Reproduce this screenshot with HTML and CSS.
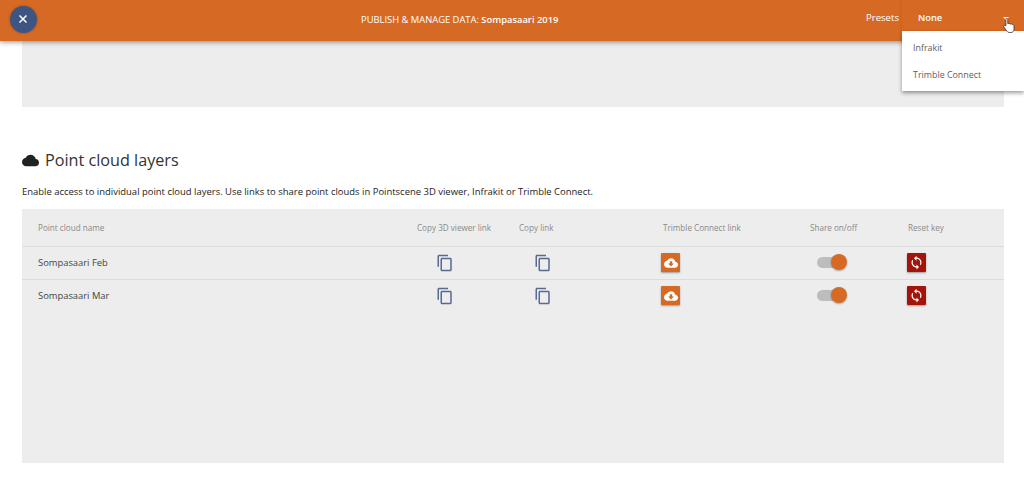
FILE: index.html
```html
<!DOCTYPE html>
<html lang="en">
<head>
<meta charset="utf-8">
<title>Publish &amp; manage data</title>
<link rel="stylesheet" href="styles.css">
</head>
<body>
<svg class="defs" width="0" height="0" aria-hidden="true">
  <symbol id="copy" viewBox="0 0 24 24"><path fill="currentColor" d="M16 1H4c-1.1 0-2 .9-2 2v14h2V3h12V1zm3 4H8c-1.1 0-2 .9-2 2v14c0 1.1.9 2 2 2h11c1.1 0 2-.9 2-2V7c0-1.1-.9-2-2-2zm0 16H8V7h11v14z"/></symbol>
  <symbol id="cloud" viewBox="0 0 24 24"><path fill="currentColor" d="M19.35 10.04C18.67 6.59 15.64 4 12 4 9.11 4 6.6 5.64 5.35 8.04 2.34 8.36 0 10.91 0 14c0 3.31 2.69 6 6 6h13c2.76 0 5-2.24 5-5 0-2.64-2.05-4.78-4.65-4.96z"/></symbol>
  <symbol id="cloud-down" viewBox="0 0 24 24"><path fill="currentColor" d="M19.35 10.04C18.67 6.59 15.64 4 12 4 9.11 4 6.6 5.64 5.35 8.04 2.34 8.36 0 10.91 0 14c0 3.31 2.69 6 6 6h13c2.76 0 5-2.24 5-5 0-2.64-2.05-4.78-4.65-4.96zM17 13l-5 5-5-5h3V9h4v4h3z"/></symbol>
  <symbol id="sync" viewBox="0 0 24 24"><path fill="currentColor" d="M12 4V1L8 5l4 4V6c3.31 0 6 2.69 6 6 0 1.01-.25 1.97-.7 2.8l1.46 1.46C19.54 15.03 20 13.57 20 12c0-4.42-3.58-8-8-8zm0 14c-3.31 0-6-2.69-6-6 0-1.01.25-1.97.7-2.8L5.24 7.74C4.46 8.97 4 10.43 4 12c0 4.42 3.58 8 8 8v3l4-4-4-4v3z"/></symbol>
</svg>

<header class="topbar">
  <button class="close" type="button" aria-label="Close">
    <svg viewBox="0 0 12 12" class="close-x"><path d="M2.500 2.500l7 7M9.500 2.500l-7 7"/></svg>
  </button>
  <h1 class="title">PUBLISH &amp; MANAGE DATA: <strong>Sompasaari 2019</strong></h1>
  <div class="presets">
    <span class="presets-label">Presets</span>
    <div class="select">
      <span class="select-value">None</span>
      <span class="select-arrow"></span>
    </div>
  </div>
</header>

<ul class="menu">
  <li>Infrakit</li>
  <li>Trimble Connect</li>
</ul>

<svg class="cursor" viewBox="0 0 12 17" aria-hidden="true">
  <path d="M3.500 1.200c.8 0 1.300.6 1.300 1.300v4.200c.9-.4 1.900-.3 2.400.3.8-.3 1.500-.1 1.900.4 1-.2 1.900.4 1.900 1.500v3.200c0 2-1.200 3.400-3 3.400H6.300c-1.200 0-1.900-.5-2.500-1.400L1 10.200c-.4-.7-.2-1.400.3-1.700.5-.3 1.100-.2 1.600.3V2.500c0-.7 0-1.300.6-1.300z" fill="#fff" stroke="#333" stroke-width=".8"/>
</svg>

<main class="content">
  <div class="panel-top"></div>

  <h2 class="heading">
    <svg class="heading-icon"><use href="#cloud"/></svg>
    Point cloud layers
  </h2>
  <p class="intro">Enable access to individual point cloud layers. Use links to share point clouds in Pointscene 3D viewer, Infrakit or Trimble Connect.</p>

  <section class="panel">
    <div class="row head">
      <div class="name">Point cloud name</div>
      <div>Copy 3D viewer link</div>
      <div>Copy link</div>
      <div class="h-trimble">Trimble Connect link</div>
      <div>Share on/off</div>
      <div class="h-reset">Reset key</div>
    </div>

    <div class="row item">
      <div class="name">Sompasaari Feb</div>
      <div class="c-viewer"><svg class="copy"><use href="#copy"/></svg></div>
      <div class="c-link"><svg class="copy"><use href="#copy"/></svg></div>
      <div><span class="square orange"><svg><use href="#cloud-down"/></svg></span></div>
      <div class="c-share"><span class="toggle"><span class="knob"></span></span></div>
      <div><span class="square red"><svg class="sync"><use href="#sync"/></svg></span></div>
    </div>

    <div class="row item">
      <div class="name">Sompasaari Mar</div>
      <div class="c-viewer"><svg class="copy"><use href="#copy"/></svg></div>
      <div class="c-link"><svg class="copy"><use href="#copy"/></svg></div>
      <div><span class="square orange"><svg><use href="#cloud-down"/></svg></span></div>
      <div class="c-share"><span class="toggle"><span class="knob"></span></span></div>
      <div><span class="square red"><svg class="sync"><use href="#sync"/></svg></span></div>
    </div>
  </section>
</main>
</body>
</html>
```
FILE: styles.css
```css
* { box-sizing: border-box; }

html, body {
  margin: 0;
  padding: 0;
  height: 482px;
  overflow: hidden;
  background: #fff;
  font-family: "Open Sans", "Noto Sans", sans-serif;
  color: #333;
}

.defs { position: absolute; }

.topbar {
  position: relative;
  z-index: 2;
  height: 41px;
  display: grid;
  grid-template-columns: 361px auto 1fr;
  align-items: center;
  background: #d66a25;
  box-shadow: 0 1px 5px rgba(0, 0, 0, .45);
  color: #fff;
}

.close {
  width: 27px;
  height: 27px;
  margin: 0 0 3px 9.5px;
  padding: 0;
  border: 0;
  border-radius: 50%;
  background: #3f5581;
  box-shadow: 0 0 3px rgba(0, 0, 0, .3);
  display: flex;
  align-items: center;
  justify-content: center;
}

.close-x { width: 12px; height: 12px; }
.close-x path { stroke: #fff; stroke-width: 1.5; fill: none; }

.title {
  margin: 0 0 3px;
  font-size: 9.400px;
  font-weight: 400;
  white-space: nowrap;
}

.title strong { font-weight: 600; }

.presets {
  justify-self: end;
  display: flex;
  align-self: stretch;
  align-items: flex-start;
}

.presets-label {
  padding: 11px 3px 0 0;
  font-size: 9.600px;
  line-height: 14px;
}

.select {
  width: 122px;
  height: 31px;
  padding: 11px 15px 0 16px;
  display: flex;
  justify-content: space-between;
  background: #d66a25;
  box-shadow: 0 0 4px rgba(0, 0, 0, .12);
}

.select-value {
  font-size: 9.300px;
  font-weight: 600;
  line-height: 14px;
}

.select-arrow {
  width: 0;
  height: 0;
  margin-top: 6px;
  border-left: 3px solid transparent;
  border-right: 3px solid transparent;
  border-top: 3px solid #fff;
}

.menu {
  position: absolute;
  z-index: 3;
  top: 31px;
  left: 902px;
  width: 122px;
  height: 60px;
  margin: 0;
  padding: 3px 0 0;
  list-style: none;
  background: #fff;
  box-shadow: 0 2px 4px rgba(0, 0, 0, .4);
  font-size: 8.900px;
  color: #5e5e5e;
}

.menu li {
  height: 27px;
  padding-left: 11px;
  line-height: 27px;
}

.cursor {
  position: absolute;
  z-index: 4;
  top: 17px;
  left: 1003px;
  width: 12px;
  height: 17px;
}

.content {
  padding: 0 20px 0 22px;
}

.panel-top {
  height: 66px;
  background: #ededed;
}

.heading {
  margin: 41px 0 0;
  height: 24px;
  display: flex;
  align-items: center;
  gap: 6px;
  font-size: 16.200px;
  font-weight: 400;
  line-height: 24px;
  color: #333;
}

.heading-icon {
  width: 17px;
  height: 17px;
  color: #222;
}

.intro {
  margin: 13px 0 0;
  font-size: 9.460px;
  line-height: 14px;
  color: #222;
}

.panel {
  margin-top: 10px;
  height: 254px;
  background: #ededed;
}

.row {
  display: grid;
  grid-template-columns: 379px 102px 142px 149px 97px 1fr;
  align-items: center;
  padding-left: 16px;
  border-bottom: 1px solid #dcdcdc;
}

.row:last-child { border-bottom-color: transparent; }

.head {
  height: 38px;
  font-size: 8.150px;
  color: #8a8a8a;
}

.item {
  height: 33px;
  padding-bottom: 1px;
  font-size: 9.400px;
  color: #444;
}

.h-trimble { padding-left: 2px; }
.h-reset { padding-left: 1px; }

.c-viewer { padding-left: 19px; }
.c-link { padding-left: 15px; }
.c-share { padding-left: 7px; }

.copy {
  display: block;
  width: 18px;
  height: 18px;
  color: #566a94;
}

.square {
  display: flex;
  align-items: center;
  justify-content: center;
  width: 19px;
  height: 19px;
  border-radius: 1px;
  box-shadow: 0 1px 2px rgba(0, 0, 0, .35);
  color: #fff;
}

.square svg { width: 14px; height: 14px; }
.square .sync { width: 15px; height: 15px; }
.orange { background: #d66a25; }
.red { background: #a3140a; }

.toggle {
  position: relative;
  display: block;
  width: 29px;
  height: 11px;
  border-radius: 6px;
  background: #bdbdbd;
}

.knob {
  position: absolute;
  top: -3px;
  right: -1px;
  width: 16px;
  height: 16px;
  border-radius: 50%;
  background: #d66a25;
  box-shadow: 0 1px 2px rgba(0, 0, 0, .3);
}
```
